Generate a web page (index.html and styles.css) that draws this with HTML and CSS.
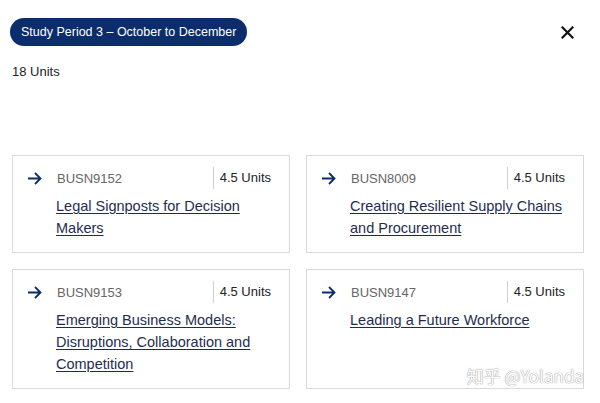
FILE: index.html
```html
<!DOCTYPE html>
<html lang="en">
<head>
<meta charset="utf-8">
<title>Study Period 3</title>
<link rel="stylesheet" href="styles.css">
</head>
<body>
<div class="page">
  <header class="top">
    <span class="pill">Study Period 3 – October to December</span>
    <button class="close" aria-label="Close">
      <svg width="13" height="13" viewBox="0 0 13 13"><path d="M1.5 1.5L11.5 11.5M11.5 1.5L1.5 11.5" stroke="#111" stroke-width="2.2" stroke-linecap="square"/></svg>
    </button>
  </header>
  <p class="total">18 Units</p>
  <div class="grid">
    <div class="card">
      <div class="head">
        <svg class="arrow" width="15" height="13" viewBox="0 0 15 13"><path d="M1 6.5H13.5M8 1L13.5 6.5L8 12" fill="none" stroke="#0c2d6b" stroke-width="1.8"/></svg>
        <span class="code">BUSN9152</span>
        <span class="units">4.5 Units</span>
      </div>
      <a class="title" href="#">Legal Signposts for Decision Makers</a>
    </div>
    <div class="card">
      <div class="head">
        <svg class="arrow" width="15" height="13" viewBox="0 0 15 13"><path d="M1 6.5H13.5M8 1L13.5 6.5L8 12" fill="none" stroke="#0c2d6b" stroke-width="1.8"/></svg>
        <span class="code">BUSN8009</span>
        <span class="units">4.5 Units</span>
      </div>
      <a class="title" href="#">Creating Resilient Supply Chains and Procurement</a>
    </div>
    <div class="card">
      <div class="head">
        <svg class="arrow" width="15" height="13" viewBox="0 0 15 13"><path d="M1 6.5H13.5M8 1L13.5 6.5L8 12" fill="none" stroke="#0c2d6b" stroke-width="1.8"/></svg>
        <span class="code">BUSN9153</span>
        <span class="units">4.5 Units</span>
      </div>
      <a class="title" href="#">Emerging Business Models: Disruptions, Collaboration and Competition</a>
    </div>
    <div class="card">
      <div class="head">
        <svg class="arrow" width="15" height="13" viewBox="0 0 15 13"><path d="M1 6.5H13.5M8 1L13.5 6.5L8 12" fill="none" stroke="#0c2d6b" stroke-width="1.8"/></svg>
        <span class="code">BUSN9147</span>
        <span class="units">4.5 Units</span>
      </div>
      <a class="title" href="#">Leading a Future Workforce</a>
      <span class="watermark">知乎 @Yolanda</span>
    </div>
  </div>
</div>
</body>
</html>
```

FILE: styles.css
```css
* { box-sizing: border-box; }
html, body { margin: 0; background: #fff; }
body {
  font-family: "Liberation Sans", Arial, "Noto Sans CJK SC", sans-serif;
  color: #222;
}
.page { padding: 18px 16px 0 10px; }
.top {
  display: flex;
  justify-content: space-between;
  align-items: center;
  height: 28px;
}
.pill {
  display: inline-flex;
  align-items: center;
  height: 28px;
  padding: 0 11px;
  border-radius: 14px;
  background: #0c2d6b;
  color: #fff;
  font-size: 12.5px;
}
.close {
  border: 0;
  background: none;
  padding: 0;
  margin-right: 10px;
  display: flex;
  cursor: pointer;
}
.total {
  margin: 18px 0 0 2px;
  font-size: 13px;
  line-height: 16px;
  color: #222;
}
.grid {
  display: grid;
  grid-template-columns: 278px 278px;
  gap: 16px;
  margin: 75px 0 0 2px;
}
.card {
  position: relative;
  border: 1px solid #d9d9d9;
  padding: 11px 18px 13px 14px;
}
.head {
  display: flex;
  align-items: center;
  height: 22px;
}
.arrow { flex: none; margin-right: 15px; }
.code { flex: 1; font-size: 13px; color: #666; }
.units {
  border-left: 1px solid #cfcfcf;
  padding-left: 6px;
  line-height: 22px;
  font-size: 13px;
  color: #222;
}
.title {
  display: block;
  margin: 6px 0 0 29px;
  font-size: 14.5px;
  line-height: 22px;
  color: #1f2d4d;
  text-decoration: underline;
  text-underline-offset: 2px;
}
.watermark {
  position: absolute;
  right: -1px;
  bottom: 0;
  font-size: 17px;
  color: #fff;
  text-shadow: 0 0 1px #999, 0 0 1px #999;
  font-family: "Noto Sans CJK SC", "Liberation Sans", sans-serif;
}
```
